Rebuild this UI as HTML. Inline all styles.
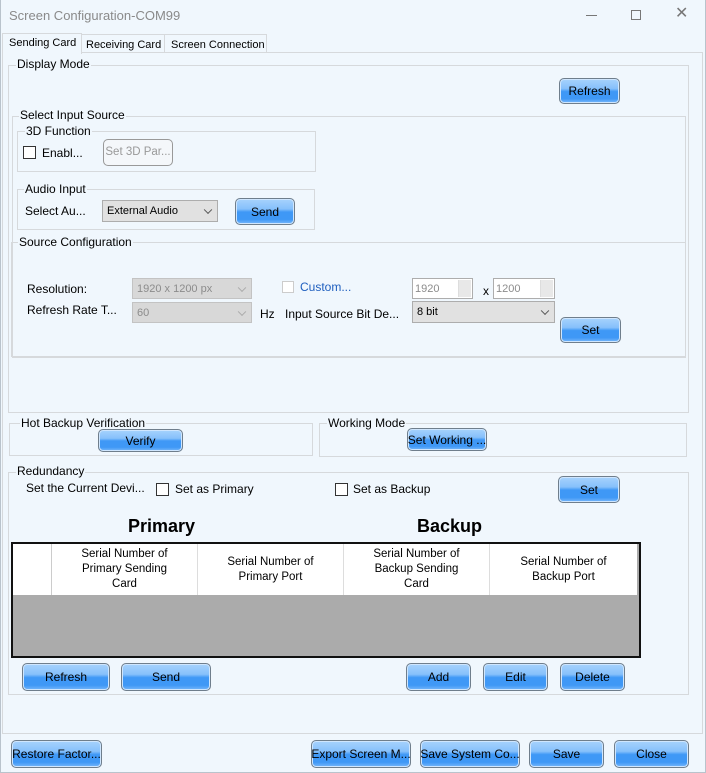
<!DOCTYPE html>
<html><head><meta charset="utf-8"><style>
*{box-sizing:border-box;margin:0;padding:0}
body{width:706px;height:773px;overflow:hidden;background:#f0f7fd;font-family:"Liberation Sans",Arial,sans-serif;font-size:12px;color:#000;position:relative}
.a{position:absolute}
.t{position:absolute;white-space:nowrap;line-height:14px}
.g{position:absolute;border:1px solid #d6d9dc}
.lg{position:absolute;background:#f0f7fd;padding:0 1px;line-height:13px;white-space:nowrap}
.b{position:absolute;border:1px solid #6f7e8c;border-radius:5px;background:linear-gradient(#a7d3fd 0%,#86c0fb 40%,#3f98f6 52%,#3f98f6 82%,#79b8fa 100%);box-shadow:inset 0 0 0 1px #cfe6fe;text-align:center;font-size:12px;white-space:nowrap;overflow:hidden;display:flex;align-items:center;justify-content:center}
.cb{position:absolute;width:13px;height:13px;border:1px solid #333;background:#fff}
.sel{position:absolute;border:1px solid #adadad;background:#e1e1e1;padding-left:4px;font-size:11px;display:flex;align-items:center}
.sel.d{background:#d8d8d8;border-color:#c3c3c3;color:#8c8c8c}
.arr{position:absolute;right:6px;top:50%;width:6px;height:6px;border-right:1px solid #555;border-bottom:1px solid #555;transform:translateY(-70%) rotate(45deg)}
.d .arr{border-color:#aaa}
.sp{position:absolute;border:1px solid #adadad;background:#fff;color:#8c8c8c;font-size:11px;padding-left:2px;display:flex;align-items:center}
.sp i{position:absolute;right:1px;top:1px;bottom:1px;width:13px;background:#e8e8e8;border-left:1px solid #ddd}
</style></head><body>
<div class="a" style="left:0;top:0;width:706px;height:773px;border:1px solid #b9c3cc;border-top:none"></div>
<div class="t" style="left:9px;top:9px;font-size:13px;color:#8a8a8a">Screen Configuration-COM99</div>
<div class="a" style="left:586px;top:15px;width:11px;height:1px;background:#777"></div>
<div class="a" style="left:631px;top:10px;width:10px;height:10px;border:1px solid #777"></div>
<div class="t" style="left:675px;top:7px;font-size:16px;color:#777">✕</div>

<div class="a" style="left:2px;top:52px;width:701px;height:682px;border:1px solid #d6d9dc"></div>
<div class="a" style="left:2px;top:33px;width:80px;height:21px;border:1px solid #d6d9dc;border-bottom:none;background:#f0f7fd"></div>
<div class="t" style="left:9px;top:36px;font-size:11px">Sending Card</div>
<div class="a" style="left:82px;top:34px;width:83px;height:19px;border:1px solid #d6d9dc;border-left:none;border-bottom:none"></div>
<div class="t" style="left:86px;top:38px;font-size:11px">Receiving Card</div>
<div class="a" style="left:165px;top:34px;width:102px;height:19px;border:1px solid #d6d9dc;border-left:none;border-bottom:none"></div>
<div class="t" style="left:171px;top:38px;font-size:11px">Screen Connection</div>

<div class="g" style="left:8px;top:65px;width:681px;height:348px"></div>
<div class="lg" style="left:16px;top:58px">Display Mode</div>
<div class="b" style="left:559px;top:78px;width:61px;height:26px">Refresh</div>

<div class="g" style="left:12px;top:116px;width:674px;height:242px"></div>
<div class="lg" style="left:19px;top:109px">Select Input Source</div>

<div class="g" style="left:17px;top:131px;width:299px;height:41px"></div>
<div class="lg" style="left:25px;top:125px">3D Function</div>
<div class="cb" style="left:23px;top:146px"></div>
<div class="t" style="left:42px;top:146px">Enabl...</div>
<div class="a" style="left:103px;top:139px;width:70px;height:27px;border:1px solid #999;border-radius:5px;background:#f4f7fa;color:#999;text-align:center;line-height:25px;white-space:nowrap;overflow:hidden;font-size:11.5px">Set 3D Par...</div>

<div class="g" style="left:17px;top:189px;width:298px;height:41px"></div>
<div class="lg" style="left:24px;top:183px">Audio Input</div>
<div class="t" style="left:25px;top:204px">Select Au...</div>
<div class="sel" style="left:102px;top:200px;width:116px;height:22px">External Audio<span class="arr"></span></div>
<div class="b" style="left:235px;top:198px;width:60px;height:27px">Send</div>

<div class="g" style="left:11px;top:242px;width:675px;height:115px"></div>
<div class="lg" style="left:18px;top:236px">Source Configuration</div>
<div class="t" style="left:27px;top:282px">Resolution:</div>
<div class="sel d" style="left:132px;top:278px;width:120px;height:21px">1920 x 1200 px<span class="arr"></span></div>
<div class="t" style="left:27px;top:303px">Refresh Rate T...</div>
<div class="sel d" style="left:132px;top:302px;width:120px;height:21px">60<span class="arr"></span></div>
<div class="t" style="left:260px;top:307px">Hz</div>
<div class="cb" style="left:282px;top:281px;border-color:#ccc;width:12px;height:12px"></div>
<div class="t" style="left:300px;top:280px;color:#1f5fbf">Custom...</div>
<div class="sp" style="left:412px;top:278px;width:61px;height:21px">1920<i></i></div>
<div class="t" style="left:483px;top:284px">x</div>
<div class="sp" style="left:493px;top:278px;width:62px;height:21px">1200<i></i></div>
<div class="t" style="left:285px;top:307px">Input Source Bit De...</div>
<div class="sel" style="left:412px;top:301px;width:143px;height:22px">8 bit<span class="arr"></span></div>
<div class="b" style="left:560px;top:317px;width:61px;height:26px">Set</div>

<div class="g" style="left:9px;top:423px;width:304px;height:33px"></div>
<div class="lg" style="left:20px;top:417px">Hot Backup Verification</div>
<div class="b" style="left:98px;top:429px;width:85px;height:23px">Verify</div>
<div class="g" style="left:319px;top:423px;width:368px;height:34px"></div>
<div class="lg" style="left:327px;top:417px">Working Mode</div>
<div class="b" style="left:407px;top:428px;width:80px;height:23px">Set Working ...</div>

<div class="g" style="left:8px;top:472px;width:681px;height:223px"></div>
<div class="lg" style="left:16px;top:465px">Redundancy</div>
<div class="t" style="left:26px;top:481px">Set the Current Devi...</div>
<div class="cb" style="left:156px;top:483px"></div>
<div class="t" style="left:175px;top:482px">Set as Primary</div>
<div class="cb" style="left:335px;top:483px"></div>
<div class="t" style="left:353px;top:482px">Set as Backup</div>
<div class="b" style="left:558px;top:476px;width:62px;height:27px">Set</div>
<div class="t" style="left:128px;top:516px;font-size:18px;font-weight:bold;line-height:20px">Primary</div>
<div class="t" style="left:417px;top:516px;font-size:18px;font-weight:bold;line-height:20px">Backup</div>

<div class="a" style="left:11px;top:542px;width:630px;height:116px;border:2px solid #111;background:#ababab"></div>
<div class="a" style="left:13px;top:544px;width:624px;height:51px;background:#fff;display:flex;font-size:11.5px">
 <div style="width:39px;border-right:1px solid #ccc"></div>
 <div style="width:146px;border-right:1px solid #ddd;display:flex;align-items:center;justify-content:center;text-align:center;line-height:15px">Serial Number of<br>Primary Sending<br>Card</div>
 <div style="width:146px;border-right:1px solid #ddd;display:flex;align-items:center;justify-content:center;text-align:center;line-height:15px">Serial Number of<br>Primary Port</div>
 <div style="width:146px;border-right:1px solid #ddd;display:flex;align-items:center;justify-content:center;text-align:center;line-height:15px">Serial Number of<br>Backup Sending<br>Card</div>
 <div style="width:147px;display:flex;align-items:center;justify-content:center;text-align:center;line-height:15px">Serial Number of<br>Backup Port</div>
</div>

<div class="b" style="left:22px;top:663px;width:88px;height:28px">Refresh</div>
<div class="b" style="left:121px;top:663px;width:90px;height:28px">Send</div>
<div class="b" style="left:406px;top:663px;width:65px;height:28px">Add</div>
<div class="b" style="left:483px;top:663px;width:65px;height:28px">Edit</div>
<div class="b" style="left:560px;top:663px;width:65px;height:28px">Delete</div>

<div class="b" style="left:11px;top:740px;width:91px;height:28px">Restore Factor...</div>
<div class="b" style="left:311px;top:740px;width:100px;height:28px">Export Screen M...</div>
<div class="b" style="left:420px;top:740px;width:100px;height:28px">Save System Co...</div>
<div class="b" style="left:529px;top:740px;width:75px;height:28px">Save</div>
<div class="b" style="left:614px;top:740px;width:75px;height:28px">Close</div>
</body></html>
